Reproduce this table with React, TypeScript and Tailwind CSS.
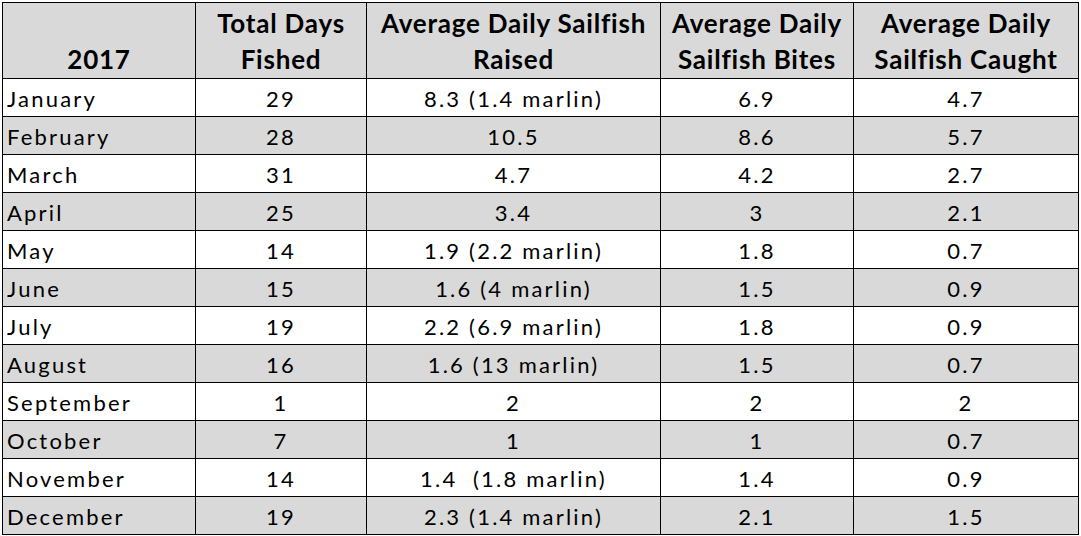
const rows: [string, string, string, string, string][] = [
  ['January', '29', '8.3 (1.4 marlin)', '6.9', '4.7'],
  ['February', '28', '10.5', '8.6', '5.7'],
  ['March', '31', '4.7', '4.2', '2.7'],
  ['April', '25', '3.4', '3', '2.1'],
  ['May', '14', '1.9 (2.2 marlin)', '1.8', '0.7'],
  ['June', '15', '1.6 (4 marlin)', '1.5', '0.9'],
  ['July', '19', '2.2 (6.9 marlin)', '1.8', '0.9'],
  ['August', '16', '1.6 (13 marlin)', '1.5', '0.7'],
  ['September', '1', '2', '2', '2'],
  ['October', '7', '1', '1', '0.7'],
  ['November', '14', '1.4  (1.8 marlin)', '1.4', '0.9'],
  ['December', '19', '2.3 (1.4 marlin)', '2.1', '1.5'],
]

const headers = ['2017', 'Total Days\nFished', 'Average Daily Sailfish\nRaised', 'Average Daily\nSailfish Bites', 'Average Daily\nSailfish Caught']

export default function App() {
  return (
    <div className="min-h-screen bg-white pl-[2px] pt-[2px] font-['Lato',sans-serif] text-black">
      <div className="grid w-fit grid-cols-[193px_171px_294px_193px_225px] border-l border-t border-black">
        {headers.map((h) => (
          <div
            key={h}
            className="box-border flex h-[76px] items-end justify-center whitespace-pre-line border-b border-r border-black bg-[#d9d9d9] pb-[1px] text-center text-[26px] font-bold leading-[36px] tracking-[0.03em]"
          >
            {h}
          </div>
        ))}
        {rows.map((r, i) => {
          const bg = i % 2 === 1 ? 'bg-[#d9d9d9]' : 'bg-white'
          return r.map((cell, j) => (
            <div
              key={`${i}-${j}`}
              className={`box-border flex h-[38px] items-center whitespace-pre border-b border-r border-black pt-[3px] text-[22px] leading-none tracking-[0.1em] ${bg} ${
                j === 0 ? 'justify-start pl-[4px]' : 'justify-center'
              }`}
            >
              {cell}
            </div>
          ))
        })}
      </div>
    </div>
  )
}
